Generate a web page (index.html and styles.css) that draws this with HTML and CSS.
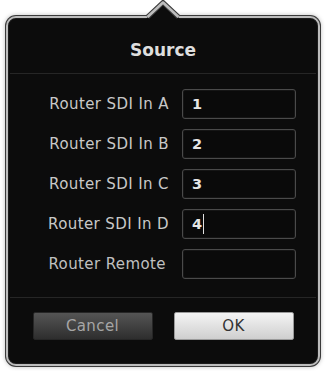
FILE: index.html
```html
<!DOCTYPE html>
<html>
<head>
<meta charset="utf-8">
<link rel="stylesheet" href="styles.css">
</head>
<body>
<div class="popover">
  <svg class="arrow" width="46" height="24" viewBox="0 0 46 24">
    <path d="M5 20 L22 3.5 L39 20 Z" fill="#0d0d0d"/>
    <path d="M6.5 18 L22 3.5 L37.5 18" fill="none" stroke="#3a3a3a" stroke-width="5" stroke-linejoin="round"/>
    <path d="M6.5 18 L22 3.5 L37.5 18" fill="none" stroke="#bdbdbd" stroke-width="2.6" stroke-linejoin="round"/>
    <path d="M8.5 21 L22 7.2 L35.5 21 Z" fill="#0d0d0d"/>
  </svg>
  <div class="title">Source</div>
  <div class="sep"></div>
  <div class="form">
    <div class="label">Router SDI In A</div><div class="field">1</div>
    <div class="label">Router SDI In B</div><div class="field">2</div>
    <div class="label">Router SDI In C</div><div class="field">3</div>
    <div class="label">Router SDI In D</div><div class="field"><span class="caret">4</span></div>
    <div class="label remote">Router Remote</div><div class="field"></div>
  </div>
  <div class="sep sep-bottom"></div>
  <div class="buttons">
    <div class="btn cancel">Cancel</div>
    <div class="btn ok">OK</div>
  </div>
</div>
</body>
</html>
```
FILE: styles.css
```css
html, body {
  margin: 0;
  padding: 0;
  background: #ffffff;
}
body {
  width: 326px;
  height: 371px;
  overflow: hidden;
  font-family: "DejaVu Sans", "Liberation Sans", sans-serif;
}
.popover {
  position: relative;
  margin: 16px 0 0 6px;
  width: 310px;
  height: 346px;
  background: #0c0c0c;
  border: 2.5px solid #bdbdbd;
  border-radius: 10px;
  box-shadow: 0 0 0 1px #3a3a3a, 0 0 4px 1px rgba(0,0,0,0.25), inset 0 0 0 1px #1c1c1c;
}
.arrow {
  position: absolute;
  top: -19px;
  left: 133px;
}
.title {
  height: 55px;
  display: flex;
  align-items: center;
  justify-content: center;
  padding-top: 9px;
  box-sizing: border-box;
  color: #dedede;
  font-weight: bold;
  font-size: 17px;
}
.sep {
  height: 1px;
  background: #262626;
  margin: 0 2px;
}
.form {
  display: grid;
  grid-template-columns: 161px 114px;
  column-gap: 13px;
  row-gap: 10px;
  padding-top: 15px;
}
.label {
  height: 30px;
  display: flex;
  align-items: center;
  justify-content: flex-end;
  color: #c8c8c8;
  font-size: 15px;
  letter-spacing: 0.4px;
}
.label.remote {
  padding-right: 3px;
  color: #c0c0c0;
}
.field {
  height: 30px;
  box-sizing: border-box;
  border: 1px solid #4a4a4a;
  border-radius: 3px;
  background: #0a0a0a;
  box-shadow: inset 0 0 0 1px #151515;
  display: flex;
  align-items: center;
  padding-left: 9px;
  color: #e6e6e6;
  font-weight: bold;
  font-size: 14.5px;
}
.caret {
  border-right: 1.5px solid #e0e0e0;
  padding-right: 1px;
  line-height: 20px;
}
.sep-bottom {
  margin-top: 18px;
}
.buttons {
  display: flex;
  justify-content: center;
  gap: 21px;
  padding-top: 14px;
}
.btn {
  width: 120px;
  height: 28px;
  box-sizing: border-box;
  border-radius: 2px;
  display: flex;
  align-items: center;
  justify-content: center;
  font-size: 15px;
  letter-spacing: 0.4px;
}
.cancel {
  background: linear-gradient(#555555, #2e2e2e);
  border: 1px solid #262626;
  color: #a6a6a6;
}
.ok {
  background: linear-gradient(#f4f4f4, #cfcfcf);
  border: 1px solid #9a9a9a;
  color: #333333;
}
```
